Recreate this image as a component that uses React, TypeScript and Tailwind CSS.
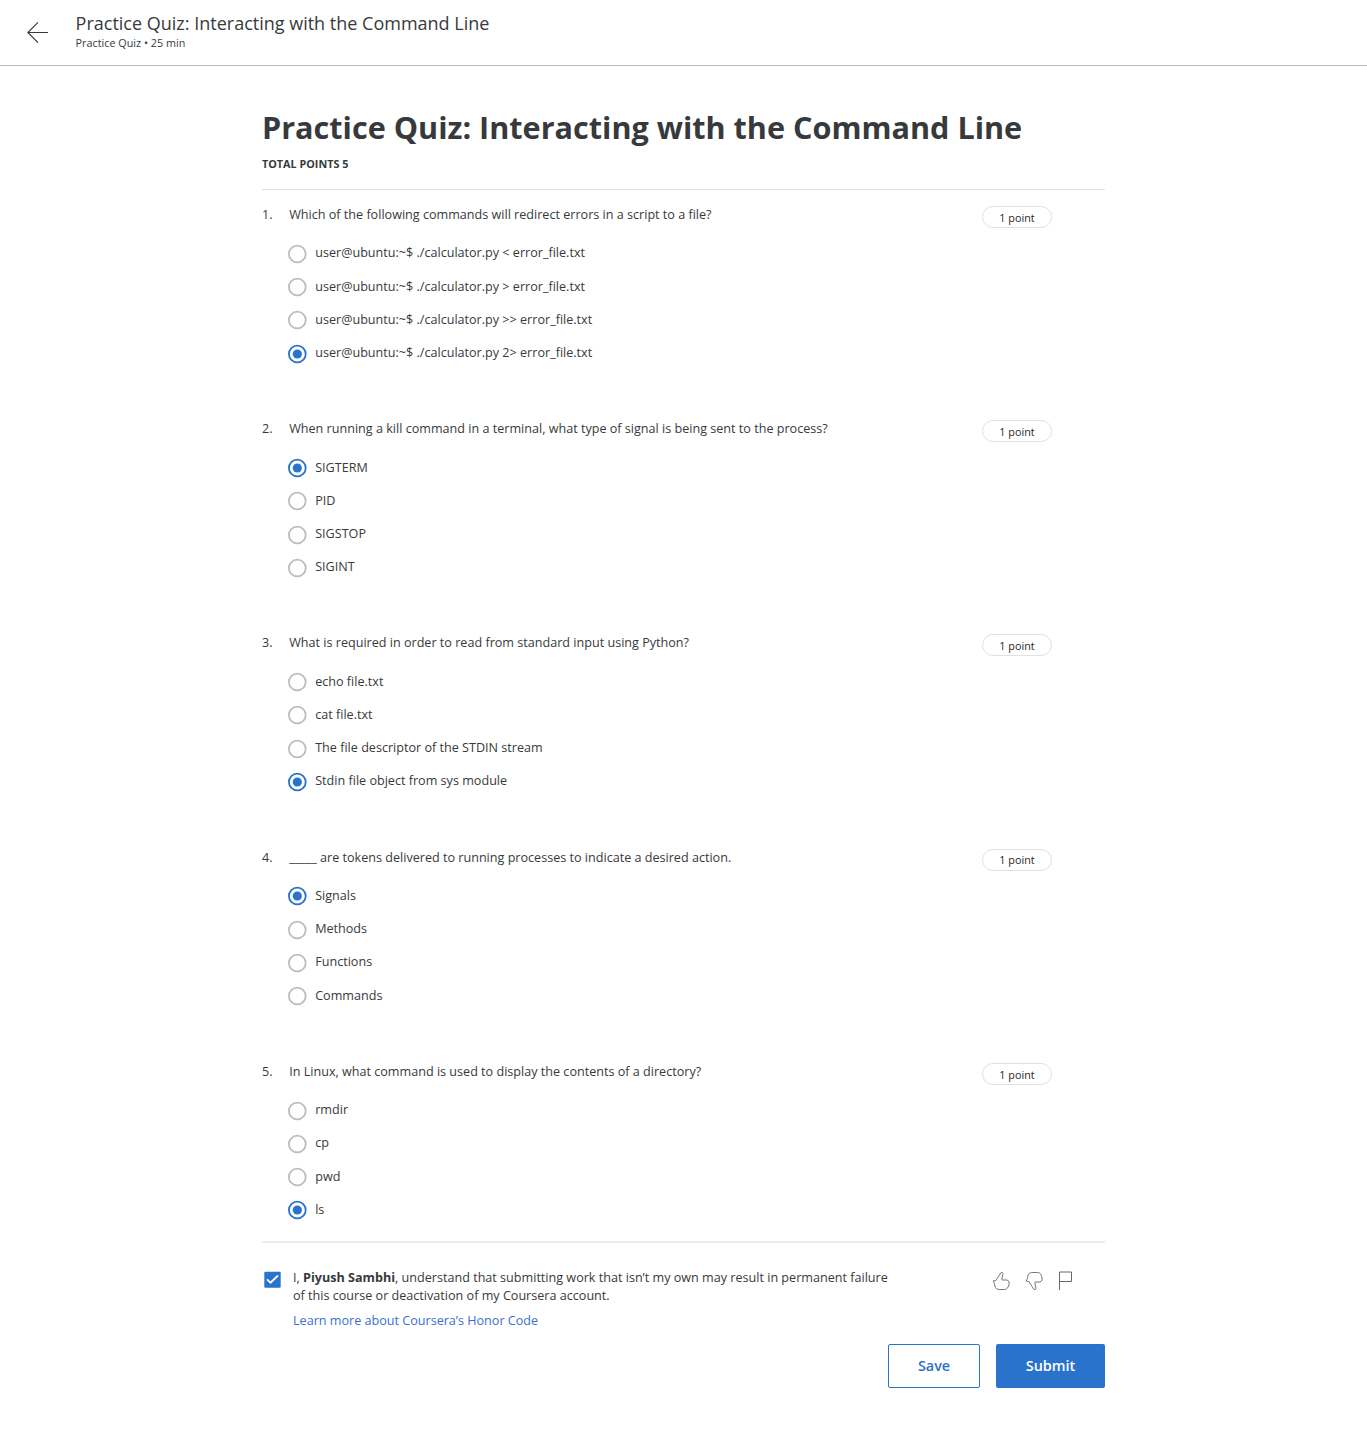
type Question = { text: string; options: string[]; selected: number };

const questions: Question[] = [
  {
    text: 'Which of the following commands will redirect errors in a script to a file?',
    options: [
      'user@ubuntu:~$ ./calculator.py < error_file.txt',
      'user@ubuntu:~$ ./calculator.py > error_file.txt',
      'user@ubuntu:~$ ./calculator.py >> error_file.txt',
      'user@ubuntu:~$ ./calculator.py 2> error_file.txt',
    ],
    selected: 3,
  },
  {
    text: 'When running a kill command in a terminal, what type of signal is being sent to the process?',
    options: ['SIGTERM', 'PID', 'SIGSTOP', 'SIGINT'],
    selected: 0,
  },
  {
    text: 'What is required in order to read from standard input using Python?',
    options: ['echo file.txt', 'cat file.txt', 'The file descriptor of the STDIN stream', 'Stdin file object from sys module'],
    selected: 3,
  },
  {
    text: '_____ are tokens delivered to running processes to indicate a desired action.',
    options: ['Signals', 'Methods', 'Functions', 'Commands'],
    selected: 0,
  },
  {
    text: 'In Linux, what command is used to display the contents of a directory?',
    options: ['rmdir', 'cp', 'pwd', 'ls'],
    selected: 3,
  },
];

function Radio({ checked }: { checked: boolean }) {
  return (
    <svg width="20" height="20" viewBox="0 0 20 20" fill="none" className="mt-px shrink-0">
      <circle cx="10.3" cy="10" r="8.4" stroke={checked ? '#2a73cc' : '#bdbdbd'} strokeWidth="1.8" />
      {checked && <circle cx="10.3" cy="10" r="4.6" fill="#2a73cc" />}
    </svg>
  );
}

function QuestionBlock({ question, number }: { question: Question; number: number }) {
  return (
    <li className="flex h-[214.2px] items-start">
      <span className="w-[27.2px] shrink-0 leading-[18px]">{number}.</span>
      <div className="w-[692.8px] shrink-0">
        <p className="leading-[18px] whitespace-nowrap">{question.text}</p>
        <div className="mt-[12.7px] -ml-[2.2px]">
          {question.options.map((option, i) => (
            <label key={option} className="flex h-[33.25px] items-center">
              <Radio checked={i === question.selected} />
              <span className="ml-[8.2px] leading-[18px]">{option}</span>
            </label>
          ))}
        </div>
      </div>
      <div className="flex h-[22px] w-[70px] shrink-0 items-center justify-center rounded-full border border-[#e1e1e1] pt-[2px] text-[10.8px] text-[#1f1f1f]">
        1 point
      </div>
    </li>
  );
}

const thumb =
  'M1.3 9.8L3.8 9.5L9 1.6Q10.8 .9 11 2.7L9.8 8.2Q9.7 9 10.8 9L15 9Q17.2 9.6 17.2 12Q17 15.5 15.2 17.4Q14.4 18.5 12.5 18.5L6.8 18.5Q4.4 18.5 3.2 16.2L2.4 12.6Z';

export default function App() {
  return (
    <div className="min-h-[1446px] w-[1367px] bg-white font-['Open_Sans',sans-serif] text-[12.6px] text-[#373a3c]">
      <header className="flex h-[66px] items-start border-b border-[#bdbdbd]">
        <svg width="22" height="22" viewBox="0 0 22 22" fill="none" stroke="#373a3c" strokeWidth="1.1" className="mt-[21px] ml-[27px]">
          <path d="M21 11.5H.8M11 1.3L.8 11.5L11 21.7" />
        </svg>
        <div className="mt-[11px] ml-[26.6px]">
          <div className="text-[18px] leading-[24px]">Practice Quiz: Interacting with the Command Line</div>
          <div className="text-[10.8px] leading-[16px]">Practice Quiz • 25 min</div>
        </div>
      </header>

      <main className="ml-[262px] w-[843px] pt-[40px]">
        <h1 className="text-[30.6px] leading-[42px] font-bold whitespace-nowrap">Practice Quiz: Interacting with the Command Line</h1>
        <div className="mt-[8px] text-[10.8px] leading-[16px] font-bold">TOTAL POINTS 5</div>
        <ol className="mt-[17px] h-[1052px] border-t border-[#e1e1e1] pt-4">
          {questions.map((question, i) => (
            <QuestionBlock key={question.text} question={question} number={i + 1} />
          ))}
        </ol>

        <footer>
          <div className="h-[2px] bg-[#ececec]" />
          <div className="flex items-start pt-[26px]">
            <svg width="17" height="17" viewBox="0 0 17 17" fill="none" className="mt-[2px] ml-[2.3px]">
              <rect x=".3" y=".8" width="16.4" height="15.9" rx="1" fill="#2a73cc" />
              <path d="M3 8.4L6.5 11.7L14 4.5" stroke="#fff" strokeWidth="1.8" />
            </svg>
            <div className="ml-[11.7px] w-[699px] leading-[18px]">
              <p>
                I, <b>Piyush Sambhi</b>, understand that submitting work that isn’t my own may result in permanent failure
                <br />
                of this course or deactivation of my Coursera account.
              </p>
              <a className="mt-[7px] block text-[#3a6fd2]">Learn more about Coursera’s Honor Code</a>
            </div>
            <div className="mt-[2px] flex gap-[14px]">
              <svg width="19" height="20" viewBox="0 0 19 20" fill="none" stroke="#66696b" strokeWidth=".9">
                <path d={thumb} />
              </svg>
              <svg width="19" height="20" viewBox="0 0 19 20" fill="none" stroke="#66696b" strokeWidth=".9" className="-scale-y-100">
                <path d={thumb} />
              </svg>
              <svg width="16" height="20" viewBox="0 0 16 20" fill="none" stroke="#66696b" strokeWidth="1">
                <path d="M1.5 19V1H13.5V10.5H1.5" />
              </svg>
            </div>
          </div>
          <div className="mt-[14px] flex justify-end gap-4 text-[14.4px] font-semibold">
            <button className="h-[44px] w-[92px] rounded-[2px] border border-[#2a73cc] text-[#2a73cc]">Save</button>
            <button className="h-[44px] w-[109px] rounded-[2px] bg-[#2a73cc] text-white">Submit</button>
          </div>
        </footer>
      </main>
    </div>
  );
}
